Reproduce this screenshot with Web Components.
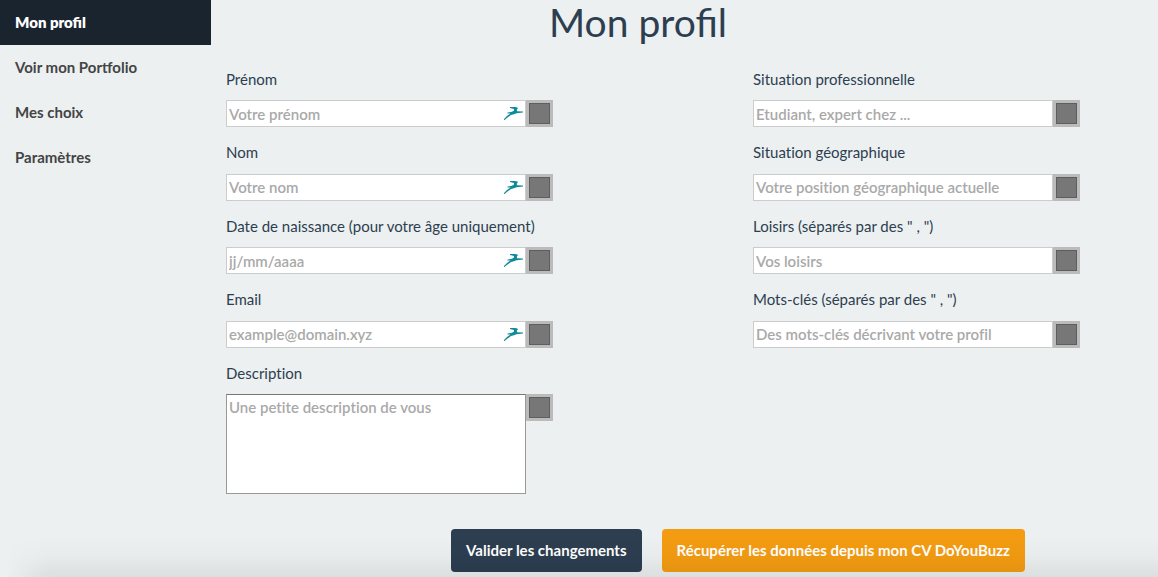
<!DOCTYPE html>
<html lang="fr">
<head>
<meta charset="utf-8">
<title>Mon profil</title>
<style>
body { margin: 0; background: #ecf0f1; font-family: Lato, sans-serif; font-size: 15px; line-height: 1.43; color: #2c3e50; }
</style>
</head>
<body>
<profile-page></profile-page>

<template id="nav-link-template">
  <style>
    :host { display: block; }
    a { display: block; padding: 12px 15px; line-height: 21px; font-weight: 700; color: #444; text-decoration: none; }
    :host([active]) a { background: #1a242f; color: #fff; font-weight: 800; }
  </style>
  <a href="#"><slot></slot></a>
</template>

<template id="field-template">
  <style>
    :host { display: block; }
    label { display: block; margin-bottom: 10px; font-variant-ligatures: none; }
    .row { display: flex; align-items: flex-start; }
    .box { position: relative; width: 300px; display: flex; }
    input:not([type]), textarea { box-sizing: border-box; flex: 1; min-width: 0; height: 27px; margin: 0; padding: 2px; border: 1px solid #ccc; border-radius: 0; background: #fff; color: #2c3e50; font: 600 15px/21px Lato, sans-serif; font-variant-ligatures: none; outline: none; resize: none; }
    textarea { height: 100px; border-color: #999; border-top-color: #777; }
    ::placeholder { color: #a9a9a9; opacity: 1; }
    svg { position: absolute; right: 3px; top: 5px; width: 20px; height: 16px; }
    .check { display: flex; padding: 3px; background: #bbb; }
    .check input { appearance: none; box-sizing: border-box; width: 21px; height: 21px; margin: 0; border: 1px solid #5e5e5e; background: #777; }
  </style>
  <label for="field"><slot></slot></label>
  <div class="row">
    <div class="box"></div>
    <span class="check"><input type="checkbox"></span>
  </div>
</template>

<template id="button-template">
  <style>
    :host { display: block; }
    button { display: block; margin: 0; padding: 11px 15px; border: 0; border-radius: 4px; background: #2c3e50; color: #fff; font: 700 15px/21px Lato, sans-serif; cursor: pointer; }
    :host([kind="warning"]) button { background: #f39c12; }
  </style>
  <button type="button"><slot></slot></button>
</template>

<template id="page-template">
  <style>
    :host { display: grid; grid-template-columns: 211px minmax(0, 1fr); min-height: 100vh; }
    main { padding: 0 15px; }
    h1 { margin: 0 0 24px; text-align: center; font-size: 39px; line-height: 45px; font-weight: 400; padding-right: 93px; }
    .columns { display: grid; grid-template-columns: 1fr 1fr; column-gap: 137px; }
    .column { display: flex; flex-direction: column; gap: 15px; }
    .actions { display: flex; justify-content: center; gap: 20px; padding: 35px 0 5px 107px; }
    .shade { position: fixed; left: 0; right: 0; bottom: 0; height: 40px; pointer-events: none; background: linear-gradient(transparent, rgba(0,0,0,.02) 50%, rgba(0,0,0,.07)); -webkit-mask-image: linear-gradient(90deg, transparent 5px, #000 50px); mask-image: linear-gradient(90deg, transparent 5px, #000 50px); }
  </style>
  <nav aria-label="Profil">
    <nav-link active>Mon profil</nav-link>
    <nav-link>Voir mon Portfolio</nav-link>
    <nav-link>Mes choix</nav-link>
    <nav-link>Paramètres</nav-link>
  </nav>
  <main>
    <h1>Mon profil</h1>
    <div class="columns">
      <div class="column">
        <profile-field placeholder="Votre prénom" autofill>Prénom</profile-field>
        <profile-field placeholder="Votre nom" autofill>Nom</profile-field>
        <profile-field placeholder="jj/mm/aaaa" autofill>Date de naissance (pour votre âge uniquement)</profile-field>
        <profile-field placeholder="example@domain.xyz" autofill>Email</profile-field>
        <profile-field placeholder="Une petite description de vous" multiline>Description</profile-field>
      </div>
      <div class="column">
        <profile-field placeholder="Etudiant, expert chez ...">Situation professionnelle</profile-field>
        <profile-field placeholder="Votre position géographique actuelle">Situation géographique</profile-field>
        <profile-field placeholder="Vos loisirs">Loisirs (séparés par des " , ")</profile-field>
        <profile-field placeholder="Des mots-clés décrivant votre profil">Mots-clés (séparés par des " , ")</profile-field>
      </div>
    </div>
    <div class="actions">
      <action-button>Valider les changements</action-button>
      <action-button kind="warning">Récupérer les données depuis mon CV DoYouBuzz</action-button>
    </div>
  </main>
  <div class="shade"></div>
</template>

<script>
class TemplateElement extends HTMLElement {
  connectedCallback() {
    if (this.shadowRoot) return;
    this.attachShadow({ mode: 'open' }).append(document.getElementById(this.constructor.template).content.cloneNode(true));
    this.setup();
  }
  setup() {}
}
class NavLink extends TemplateElement { static template = 'nav-link-template'; }
class ActionButton extends TemplateElement { static template = 'button-template'; }
class ProfilePage extends TemplateElement { static template = 'page-template'; }
class ProfileField extends TemplateElement {
  static template = 'field-template';
  setup() {
    const box = this.shadowRoot.querySelector('.box');
    const control = document.createElement(this.hasAttribute('multiline') ? 'textarea' : 'input');
    control.id = 'field';
    control.placeholder = this.getAttribute('placeholder');
    box.append(control);
    this.shadowRoot.querySelector('.check input').setAttribute('aria-label', 'Afficher ' + this.textContent);
    if (this.hasAttribute('autofill')) {
      box.insertAdjacentHTML('beforeend', '<svg viewBox="0 0 20 16" aria-hidden="true"><path fill="#0e8a9a" d="M7 2h5l2.500.6.3 1-1 1.200.2 1.400 6 .2v1l-6.500.8-2.500 1-3 .8-3.500 2.500L1.500 15H1v-1l3-3 3.500-2.600-3 .1V7.600l4.500-.8 2-1.300V4L7 3z"/></svg>');
    }
  }
}
customElements.define('nav-link', NavLink);
customElements.define('profile-field', ProfileField);
customElements.define('action-button', ActionButton);
customElements.define('profile-page', ProfilePage);
</script>
</body>
</html>
